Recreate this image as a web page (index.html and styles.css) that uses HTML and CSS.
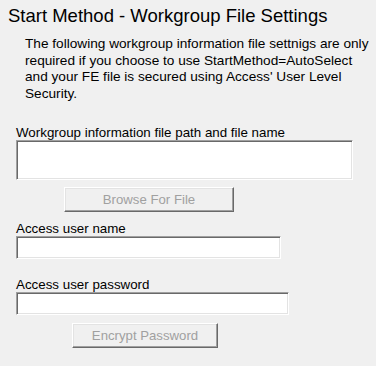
FILE: index.html
```html
<!DOCTYPE html>
<html lang="en">
  <head>
    <meta charset="UTF-8" />
    <title>Start Method - Workgroup File Settings</title>
    <link rel="stylesheet" href="styles.css">
  </head>
  <body>
    <div class="page">
      <h1 class="title">Start Method - Workgroup File Settings</h1>
      <p class="intro">
        The following workgroup information file settnigs are only<br />
        required if you choose to use StartMethod=AutoSelect<br />
        and your FE file is secured using Access' User Level<br />
        Security.
      </p>

      <form class="settings">
        <label class="field-label" for="mdwPath">Workgroup information file path and file name</label>
        <input type="text" id="mdwPath" class="textbox textbox-path" />
        <button type="button" class="win-btn btn-browse" disabled>Browse For File</button>

        <label class="field-label label-user" for="userName">Access user name</label>
        <input type="text" id="userName" class="textbox textbox-user" />

        <label class="field-label label-pass" for="userPass">Access user password</label>
        <input type="text" id="userPass" class="textbox textbox-pass" />
        <button type="button" class="win-btn btn-encrypt" disabled>Encrypt Password</button>
      </form>
    </div>
  </body>
</html>
```

FILE: styles.css
```css
* {
  margin: 0;
  padding: 0;
  box-sizing: border-box;
}

body {
  font-family: "Liberation Sans", Arial, sans-serif;
  background: #f0f0f0;
  color: #000000;
  width: 376px;
  height: 366px;
  overflow: hidden;
}

.page {
  padding-top: 6px;
}

.title {
  font-size: 18.5px;
  font-weight: 400;
  line-height: 20px;
  margin-left: 8px;
  white-space: nowrap;
}

.intro {
  font-size: 13.65px;
  line-height: 16.67px;
  margin: 10px 0 0 25px;
  white-space: nowrap;
}

.settings {
  padding-left: 16px;
}

.field-label {
  display: block;
  font-size: 13.35px;
  line-height: 15px;
  margin-top: 22px;
  white-space: nowrap;
}

.label-user {
  margin-top: 9px;
}

.label-pass {
  margin-top: 18px;
}

.textbox {
  display: block;
  appearance: none;
  background: #ffffff;
  border: 1px solid;
  border-color: #a0a0a0 #ffffff #ffffff #a0a0a0;
  box-shadow: inset 1px 1px 0 #696969, inset -1px -1px 0 #e3e3e3;
  font-family: inherit;
  font-size: 13.35px;
  outline: none;
  height: 23px;
}

.textbox-path {
  width: 337px;
  height: 40px;
}

.textbox-user {
  width: 265px;
}

.textbox-pass {
  width: 273px;
}

.win-btn {
  display: block;
  appearance: none;
  height: 25px;
  background: #f0f0f0;
  border: 1px solid;
  border-color: #ffffff #696969 #696969 #ffffff;
  box-shadow: inset -1px -1px 0 #a0a0a0, inset 1px 1px 0 #e3e3e3;
  font-family: inherit;
  font-size: 13.2px;
  color: #a0a0a0;
  text-align: center;
}

.btn-browse {
  width: 170px;
  margin: 7px 0 0 48px;
}

.btn-encrypt {
  width: 146px;
  margin: 8px 0 0 56px;
}
```
